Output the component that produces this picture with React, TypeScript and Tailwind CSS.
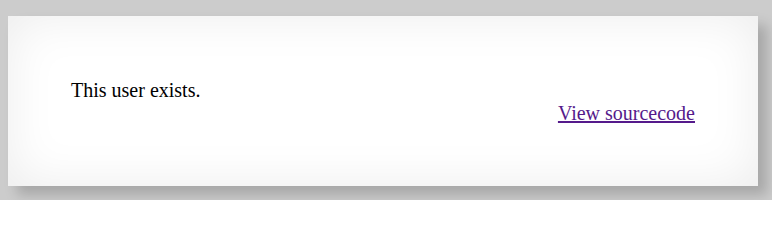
export default function App() {
  return (
    <div className="h-[200px] overflow-hidden bg-[#cccccc] pt-[16px] px-[8px]" style={{ fontFamily: '"Liberation Serif", "Times New Roman", serif' }}>
      <div className="w-[750px] h-[170px] bg-white px-[63px] pt-[63px] text-[20px] leading-[23px] text-black shadow-[9px_9px_12px_rgba(0,0,0,0.18),inset_0_0_50px_rgba(0,0,0,0.08)]">
        <p>This user exists.</p>
        <p className="text-right">
          <a href="#" className="text-[#551a8b] underline">View sourcecode</a>
        </p>
      </div>
    </div>
  );
}
